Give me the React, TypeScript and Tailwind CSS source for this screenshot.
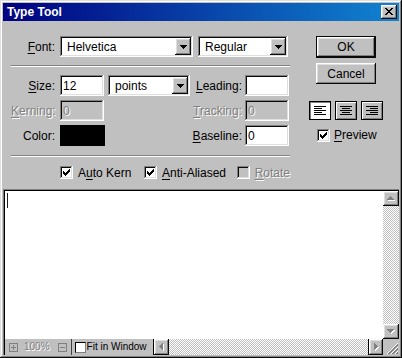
import React from "react";

const RAISED =
  "shadow-[inset_-1px_-1px_#0a0a0a,inset_1px_1px_#ffffff,inset_-2px_-2px_#808080,inset_2px_2px_#dfdfdf]";
const SUNKEN =
  "shadow-[inset_-1px_-1px_#ffffff,inset_1px_1px_#808080,inset_-2px_-2px_#dfdfdf,inset_2px_2px_#0a0a0a]";
const WINDOW =
  "shadow-[inset_-1px_-1px_#0a0a0a,inset_1px_1px_#dfdfdf,inset_-2px_-2px_#808080,inset_2px_2px_#ffffff]";
const DEFAULT_BTN =
  "shadow-[inset_-1px_-1px_#0a0a0a,inset_1px_1px_#0a0a0a,inset_-2px_-2px_#0a0a0a,inset_2px_2px_#ffffff,inset_-3px_-3px_#808080,inset_3px_3px_#dfdfdf]";
const DIS = "text-[#808080] [text-shadow:1px_1px_0_#ffffff]";
const CHECKER =
  "bg-[image:conic-gradient(#c0c0c0_25%,#ffffff_0_50%,#c0c0c0_0_75%,#ffffff_0)] bg-[length:2px_2px]";

const CHECK_PATH =
  "M6 0h1v1h-1zM5 1h2v1h-2zM0 2h1v1h-1zM4 2h3v1h-3zM0 3h2v1h-2zM3 3h3v1h-3zM0 4h5v1h-5zM1 5h3v1h-3zM2 6h1v1h-1z";
const CLOSE_PATH =
  "M0 0h2v1h-2zM6 0h2v1h-2zM1 1h2v1h-2zM5 1h2v1h-2zM2 2h4v1h-4zM3 3h2v1h-2zM2 4h4v1h-4zM1 5h2v1h-2zM5 5h2v1h-2zM0 6h2v1h-2zM6 6h2v1h-2z";
const TRI_DOWN = "M0 0h7v1h-7zM1 1h5v1h-5zM2 2h3v1h-3zM3 3h1v1h-1z";
const TRI_UP = "M3 0h1v1h-1zM2 1h3v1h-3zM1 2h5v1h-5zM0 3h7v1h-7z";
const TRI_LEFT = "M0 3h1v1h-1zM1 2h1v3h-1zM2 1h1v5h-1zM3 0h1v7h-1z";
const TRI_RIGHT = "M0 0h1v7h-1zM1 1h1v5h-1zM2 2h1v3h-1zM3 3h1v1h-1z";

function U({ children }: { children: React.ReactNode }) {
  return <span className="underline underline-offset-2">{children}</span>;
}

function Label({
  w,
  disabled,
  children,
}: {
  w: string;
  disabled?: boolean;
  children: React.ReactNode;
}) {
  return (
    <div
      className={`${w} shrink-0 whitespace-nowrap text-right text-[12px] ${
        disabled ? DIS : "text-black"
      }`}
    >
      {children}
    </div>
  );
}

function Field({
  w,
  ml,
  value,
  disabled,
}: {
  w: string;
  ml: string;
  value?: string;
  disabled?: boolean;
}) {
  return (
    <div
      className={`${w} ${ml} flex h-[21px] shrink-0 items-center pl-[3px] text-[12px] ${SUNKEN} ${
        disabled ? `bg-[#c0c0c0] ${DIS}` : "bg-white text-black"
      }`}
    >
      {value}
    </div>
  );
}

function Combo({ w, ml, text }: { w: string; ml: string; text: string }) {
  return (
    <div
      className={`${w} ${ml} flex h-[21px] shrink-0 items-stretch bg-white p-[2px] ${SUNKEN}`}
    >
      <span className="flex flex-1 items-center pl-[5px] text-[12px] text-black">
        {text}
      </span>
      <div
        className={`flex w-[16px] items-center justify-center bg-[#c0c0c0] ${RAISED}`}
      >
        <svg width="7" height="4" viewBox="0 0 7 4" shapeRendering="crispEdges">
          <path d={TRI_DOWN} fill="#000" />
        </svg>
      </div>
    </div>
  );
}

function CheckBox({ checked, disabled }: { checked?: boolean; disabled?: boolean }) {
  return (
    <div
      className={`flex h-[13px] w-[13px] shrink-0 items-center justify-center ${SUNKEN} ${
        disabled ? "bg-[#c0c0c0]" : "bg-white"
      }`}
    >
      {checked && (
        <svg width="7" height="7" viewBox="0 0 7 7" shapeRendering="crispEdges">
          <path d={CHECK_PATH} fill="#000" />
        </svg>
      )}
    </div>
  );
}

function Separator({ mt }: { mt: string }) {
  return (
    <div className={`${mt} h-[2px] w-full border-t border-b border-t-[#808080] border-b-white`} />
  );
}

function DisabledArrow({ d, w, h }: { d: string; w: number; h: number }) {
  return (
    <svg
      width={w + 1}
      height={h + 1}
      viewBox={`0 0 ${w + 1} ${h + 1}`}
      shapeRendering="crispEdges"
    >
      <g transform="translate(1 1)">
        <path d={d} fill="#ffffff" />
      </g>
      <path d={d} fill="#808080" />
    </svg>
  );
}

function ScrollBtn({
  cls,
  d,
  w,
  h,
}: {
  cls: string;
  d: string;
  w: number;
  h: number;
}) {
  return (
    <div className={`${cls} flex shrink-0 items-center justify-center bg-[#c0c0c0] ${RAISED}`}>
      <DisabledArrow d={d} w={w} h={h} />
    </div>
  );
}

function AlignIcon({ align }: { align: "left" | "center" | "right" }) {
  const rows = [12, 8, 12, 8, 12];
  return (
    <svg width="12" height="9" viewBox="0 0 12 9" shapeRendering="crispEdges">
      {rows.map((len, i) => {
        const x = align === "left" ? 0 : align === "right" ? 12 - len : (12 - len) / 2;
        return <rect key={i} x={x} y={i * 2} width={len} height={1} fill="#000" />;
      })}
    </svg>
  );
}

function AlignBtn({ align, selected }: { align: "left" | "center" | "right"; selected?: boolean }) {
  return (
    <div
      className={`flex h-[19px] w-[22px] items-center justify-center border border-black ${
        selected
          ? "bg-white shadow-[inset_1px_1px_#808080]"
          : "bg-[#c0c0c0] shadow-[inset_1px_1px_#ffffff,inset_-1px_-1px_#808080]"
      }`}
    >
      <AlignIcon align={align} />
    </div>
  );
}

function Grip() {
  const pixels: string[] = [];
  const lines: [number, string][] = [
    [1, "#ffffff"],
    [2, "#808080"],
    [3, "#808080"],
    [5, "#ffffff"],
    [6, "#808080"],
    [7, "#808080"],
    [9, "#ffffff"],
    [10, "#808080"],
    [11, "#808080"],
  ];
  return (
    <svg width="12" height="12" viewBox="0 0 12 12" shapeRendering="crispEdges">
      {lines.map(([k, color], idx) => {
        const parts: string[] = [];
        for (let x = k; x < 12; x++) {
          const y = 12 - (x - k) - 1;
          parts.push(`M${x} ${y}h1v1h-1z`);
        }
        pixels.push("");
        return <path key={idx} d={parts.join("")} fill={color} />;
      })}
    </svg>
  );
}

function SmallBox({ ml, plus }: { ml: string; plus?: boolean }) {
  return (
    <div className={`${ml} flex h-[9px] w-[9px] shrink-0 items-center justify-center border border-[#808080]`}>
      <svg width="5" height="5" viewBox="0 0 5 5" shapeRendering="crispEdges">
        <rect x="0" y="2" width="5" height="1" fill="#808080" />
        {plus && <rect x="2" y="0" width="1" height="5" fill="#808080" />}
      </svg>
    </div>
  );
}

export default function App() {
  return (
    <div
      className={`flex h-[358px] w-[402px] flex-col bg-[#c0c0c0] p-[3px] font-['Liberation_Sans',Arial,sans-serif] ${WINDOW}`}
    >
      {/* Title bar */}
      <div className="flex h-[18px] shrink-0 items-center bg-[linear-gradient(to_right,#000080,#1084d0)]">
        <span className="pl-[4px] text-[12px] font-bold text-white">Type Tool</span>
        <div
          className={`ml-auto mr-[2px] flex h-[14px] w-[16px] items-center justify-center bg-[#c0c0c0] ${RAISED}`}
        >
          <svg width="8" height="7" viewBox="0 0 8 7" shapeRendering="crispEdges" className="-mt-px">
            <path d={CLOSE_PATH} fill="#000" />
          </svg>
        </div>
      </div>

      {/* Form area */}
      <div className="flex h-[168px] shrink-0">
        <div className="ml-[8px] flex w-[279px] flex-col">
          <div className="mt-[15px] flex h-[21px] items-center">
            <Label w="w-[44px]">
              <U>F</U>ont:
            </Label>
            <Combo w="w-[133px]" ml="ml-[5px]" text="Helvetica" />
            <Combo w="w-[90px]" ml="ml-[5px]" text="Regular" />
          </div>

          <Separator mt="mt-[8px]" />

          <div className="mt-[8px] flex h-[21px] items-center">
            <Label w="w-[44px]">
              <U>S</U>ize:
            </Label>
            <Field w="w-[44px]" ml="ml-[5px]" value="12" />
            <Combo w="w-[82px]" ml="ml-[4px]" text="points" />
            <Label w="w-[52px]">
              <U>L</U>eading:
            </Label>
            <Field w="w-[44px]" ml="ml-[3px]" />
          </div>

          <div className="mt-[4px] flex h-[21px] items-center">
            <Label w="w-[44px]" disabled>
              <U>K</U>erning:
            </Label>
            <Field w="w-[44px]" ml="ml-[5px]" value="0" disabled />
            <Label w="w-[138px]" disabled>
              <U>T</U>racking:
            </Label>
            <Field w="w-[44px]" ml="ml-[3px]" value="0" disabled />
          </div>

          <div className="mt-[4px] flex h-[21px] items-center">
            <Label w="w-[44px]">Color:</Label>
            <div className="ml-[5px] h-[21px] w-[45px] shrink-0 bg-black" />
            <Label w="w-[137px]">
              <U>B</U>aseline:
            </Label>
            <Field w="w-[44px]" ml="ml-[3px]" value="0" />
          </div>

          <Separator mt="mt-[9px]" />

          <div className="mt-[9px] flex h-[13px] items-center text-[12px] text-black">
            <div className="ml-[49px] flex w-[87px] items-center">
              <CheckBox checked />
              <span className="ml-[5px] whitespace-nowrap">
                A<U>u</U>to Kern
              </span>
            </div>
            <div className="flex w-[96px] items-center">
              <CheckBox checked />
              <span className="ml-[5px] whitespace-nowrap">
                <U>A</U>nti-Aliased
              </span>
            </div>
            <div className="flex items-center">
              <CheckBox disabled />
              <span className={`ml-[5px] whitespace-nowrap ${DIS}`}>
                <U>R</U>otate
              </span>
            </div>
          </div>
        </div>

        {/* Right column */}
        <div className="ml-[19px] flex w-[74px] flex-col">
          <div
            className={`ml-[7px] mt-[15px] flex h-[22px] w-[60px] items-center justify-center text-[12px] text-black ${DEFAULT_BTN}`}
          >
            OK
          </div>
          <div
            className={`ml-[7px] mt-[5px] flex h-[21px] w-[60px] items-center justify-center text-[12px] text-black ${RAISED}`}
          >
            Cancel
          </div>
          <div className="mt-[17px] flex gap-[4px]">
            <AlignBtn align="left" selected />
            <AlignBtn align="center" />
            <AlignBtn align="right" />
          </div>
          <div className="ml-[8px] mt-[6px] flex items-center text-[12px] text-black">
            <CheckBox checked />
            <span className="ml-[4px]">
              <U>P</U>review
            </span>
          </div>
        </div>
      </div>

      {/* Text area */}
      <div className="flex min-h-0 flex-1 flex-col border-l border-t border-[#808080]">
        <div className="flex min-h-0 flex-1 flex-col border-l border-t border-black">
          <div className="flex min-h-0 flex-1">
            <div className="flex-1 bg-white pl-[2px] pt-[2px]">
              <div className="h-[15px] w-px bg-[#202020]" />
            </div>
            <div className="flex w-[16px] flex-col">
              <ScrollBtn cls="h-[15px] w-[16px]" d={TRI_UP} w={7} h={4} />
              <div className={`flex-1 ${CHECKER}`} />
              <ScrollBtn cls="h-[15px] w-[16px]" d={TRI_DOWN} w={7} h={4} />
            </div>
          </div>
          <div className="flex h-[16px] shrink-0 items-stretch">
            <div className="flex w-[149px] shrink-0 items-center border-r border-black bg-[#c0c0c0]">
              <SmallBox ml="ml-[4px]" plus />
              <span className={`ml-[6px] text-[10px] leading-none ${DIS}`}>100%</span>
              <SmallBox ml="ml-[8px]" />
              <div className="ml-[4px] h-full w-px bg-[#404040]" />
              <div className="ml-[3px] h-[11px] w-[11px] shrink-0 border border-b-[#808080] border-l-black border-r-[#808080] border-t-black bg-white" />
              <span className="ml-px whitespace-nowrap text-[10px] leading-none text-black">
                Fit in Window
              </span>
            </div>
            <ScrollBtn cls="w-[15px]" d={TRI_LEFT} w={4} h={7} />
            <div className={`flex-1 ${CHECKER}`} />
            <div className="w-px bg-black" />
            <ScrollBtn cls="w-[14px]" d={TRI_RIGHT} w={4} h={7} />
            <div className="flex w-[16px] items-end justify-end bg-[#c0c0c0] pb-px pr-px">
              <Grip />
            </div>
          </div>
        </div>
      </div>
    </div>
  );
}
